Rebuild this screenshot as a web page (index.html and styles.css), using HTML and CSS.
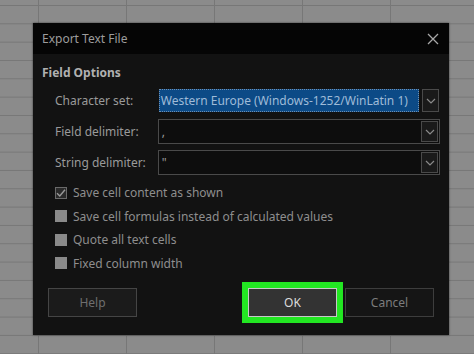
FILE: index.html
```html
<!DOCTYPE html>
<html>
<head>
<meta charset="utf-8">
<link rel="stylesheet" href="styles.css">
</head>
<body>
<div class="sheet">
  <div class="dialog">
    <div class="titlebar">
      <span class="title">Export Text File</span>
      <svg class="close" width="12" height="12" viewBox="0 0 12 12"><path d="M1 1L11 11M11 1L1 11" stroke="#a8a8a8" stroke-width="1.3" fill="none"/></svg>
    </div>
    <div class="body">
      <div class="heading">Field Options</div>
      <div class="fields">
        <div class="field">
          <span class="label">Character set:</span>
          <div class="combo first">
            <div class="value selected">Western Europe (Windows-1252/WinLatin 1)</div>
            <div class="btn"><svg width="10" height="6" viewBox="0 0 10 6"><path d="M1 1L5 5L9 1" stroke="#8a8a8a" stroke-width="1.2" fill="none"/></svg></div>
          </div>
        </div>
        <div class="field">
          <span class="label">Field delimiter:</span>
          <div class="combo">
            <div class="value">,</div>
            <div class="btn"><svg width="10" height="6" viewBox="0 0 10 6"><path d="M1 1L5 5L9 1" stroke="#8a8a8a" stroke-width="1.2" fill="none"/></svg></div>
          </div>
        </div>
        <div class="field">
          <span class="label">String delimiter:</span>
          <div class="combo">
            <div class="value">"</div>
            <div class="btn"><svg width="10" height="6" viewBox="0 0 10 6"><path d="M1 1L5 5L9 1" stroke="#8a8a8a" stroke-width="1.2" fill="none"/></svg></div>
          </div>
        </div>
      </div>
      <div class="checks">
        <label class="check"><span class="box checked"><svg width="12" height="12" viewBox="0 0 12 12"><path d="M2 6.2L4.8 9L10 2.8" stroke="#9a9a9a" stroke-width="1.4" fill="none"/></svg></span>Save cell content as shown</label>
        <label class="check"><span class="box"></span>Save cell formulas instead of calculated values</label>
        <label class="check"><span class="box"></span>Quote all text cells</label>
        <label class="check"><span class="box"></span>Fixed column width</label>
      </div>
      <div class="buttons">
        <div class="button help">Help</div>
        <div class="right">
          <div class="button ok">OK</div>
          <div class="button cancel">Cancel</div>
        </div>
      </div>
    </div>
  </div>
</div>
</body>
</html>
```
FILE: styles.css
```css
html, body {
  margin: 0;
  padding: 0;
}
body {
  width: 474px;
  height: 354px;
  overflow: hidden;
  font-family: "Noto Sans", "Open Sans", sans-serif;
}
.sheet {
  position: relative;
  width: 474px;
  height: 354px;
  background-color: #8b8b8b;
  background-image:
    linear-gradient(to right, #777 0, #777 1px, transparent 1px),
    linear-gradient(to bottom, #777 0, #777 1px, transparent 1px);
  background-size: 88px 100%, 100% 18.33px;
  background-position: 38px 0, 0 5px;
}
.dialog {
  position: absolute;
  left: 33px;
  top: 23px;
  width: 416px;
  height: 312px;
  background: #121212;
  box-shadow: 0 0 2px rgba(0,0,0,0.6);
  display: flex;
  flex-direction: column;
}
.titlebar {
  height: 31px;
  background: #050505;
  display: flex;
  align-items: center;
  justify-content: space-between;
  padding: 0 10px 0 9px;
}
.title {
  color: #9c9c9c;
  font-size: 12px;
  white-space: nowrap;
}
.close {
  display: block;
}
.body {
  flex: 1;
  display: flex;
  flex-direction: column;
  padding: 11px 9px 0 9px;
}
.heading {
  color: #b0b0b0;
  font-size: 12px;
  font-weight: bold;
  line-height: 16px;
  height: 16px;
  white-space: nowrap;
}
.fields {
  display: flex;
  flex-direction: column;
  gap: 6px;
  margin-top: 7px;
}
.field {
  display: flex;
  align-items: center;
  height: 25px;
}
.label {
  width: 103px;
  padding-left: 13px;
  color: #9a9a9a;
  font-size: 12px;
  white-space: nowrap;
}
.combo {
  width: 283px;
  height: 25px;
  box-sizing: border-box;
  border: 1px solid #4a4a4a;
  background: #0d0d0d;
  display: flex;
  align-items: stretch;
}
.combo.first {
  border-color: transparent;
  background: #121212;
  gap: 3px;
}
.value {
  flex: 1;
  color: #9a9a9a;
  font-size: 12px;
  line-height: 23px;
  padding-left: 3px;
  white-space: nowrap;
  overflow: hidden;
}
.value.selected {
  background: #0c4a86;
  color: #9fbbd8;
  outline: 1px dotted #6f8fb0;
  outline-offset: -1px;
  padding-left: 2px;
}
.btn {
  width: 17px;
  box-sizing: border-box;
  border: 1px solid #4a4a4a;
  margin: 1px 1px 1px 0;
  display: flex;
  align-items: center;
  justify-content: center;
  background: #1a1a1a;
}
.combo.first .btn {
  margin: 0;
}
.checks {
  display: flex;
  flex-direction: column;
  margin-top: 6px;
  padding-left: 13px;
}
.check {
  display: flex;
  align-items: center;
  height: 23.5px;
  color: #8e8e8e;
  font-size: 12px;
  white-space: nowrap;
}
.box {
  width: 12px;
  height: 12px;
  background: #8a8a8a;
  margin-right: 6px;
  box-sizing: border-box;
  flex: none;
}
.box.checked {
  background: #2a2a2a;
  border: 1px solid #6a6a6a;
  display: flex;
  align-items: center;
  justify-content: center;
}
.box.checked svg {
  display: block;
  margin: -1px;
}
.buttons {
  display: flex;
  justify-content: space-between;
  margin-top: 13px;
  padding: 0 6px 0 6px;
}
.right {
  display: flex;
  gap: 8px;
}
.button {
  width: 89px;
  height: 29px;
  box-sizing: border-box;
  display: flex;
  align-items: center;
  justify-content: center;
  font-size: 12px;
}
.help {
  background: #1b1b1b;
  border: 1px solid #454545;
  color: #6f6f6f;
}
.ok {
  background: #333333;
  border: 1px solid #c8c8c8;
  color: #dcdcdc;
  box-shadow: 0 0 0 6px #22e622;
}
.cancel {
  background: #151515;
  border: 1px solid #3d3d3d;
  color: #7c7c7c;
}
```
